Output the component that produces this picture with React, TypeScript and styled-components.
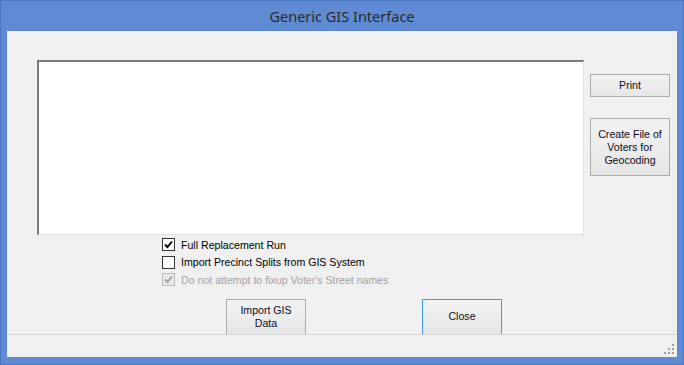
import React from 'react'
import styled, { createGlobalStyle } from 'styled-components'

const GlobalStyle = createGlobalStyle`
  html, body {
    margin: 0;
    padding: 0;
    background: #5f8bd4;
  }
  * {
    box-sizing: border-box;
  }
`

const Window = styled.div`
  width: 684px;
  height: 365px;
  display: flex;
  flex-direction: column;
  background: #5f8bd4;
  border: 1px solid #4a76c2;
  font-family: 'Liberation Sans', Arial, sans-serif;
`

const TitleBar = styled.div`
  height: 30px;
  display: flex;
  align-items: center;
  justify-content: center;
  font-family: 'Noto Sans', 'Open Sans', sans-serif;
  font-size: 14.5px;
  color: #2b2b2b;
`

const Client = styled.div`
  flex: 1;
  margin: 0 6px 7px 6px;
  background: #f0f0f0;
  display: flex;
  flex-direction: column;
  overflow: hidden;
`

const Main = styled.div`
  height: 303px;
  overflow: hidden;
  padding: 29px 0 0 30px;
  display: flex;
  flex-direction: column;
`

const TopRow = styled.div`
  display: flex;
  align-items: flex-start;
`

const ListBox = styled.div`
  width: 547px;
  height: 175px;
  background: #fff;
  border-top: 2px solid #7a7a7a;
  border-left: 2px solid #7a7a7a;
  border-right: 1px solid #e3e3e3;
  border-bottom: 1px solid #e3e3e3;
`

const SideColumn = styled.div`
  display: flex;
  flex-direction: column;
  gap: 21px;
  margin-left: 6px;
  padding-top: 14px;
`

const Button = styled.button<{ $h: number; $focused?: boolean }>`
  width: 80px;
  height: ${p => p.$h}px;
  padding: 0 2px;
  margin: 0;
  font-family: 'Liberation Sans', Arial, sans-serif;
  font-size: 10.6px;
  line-height: 13px;
  color: #0c0c24;
  text-align: center;
  background: linear-gradient(#f2f2f2, #e6e6e6);
  border: 1px solid ${p => (p.$focused ? '#3c9cfc' : '#acacac')};
  border-radius: 0;
  display: flex;
  align-items: center;
  justify-content: center;
`

const Options = styled.div`
  display: flex;
  flex-direction: column;
  margin: 1px 0 0 125px;
`

const OptionRow = styled.label<{ $disabled?: boolean }>`
  height: 17.5px;
  display: flex;
  align-items: center;
  gap: 6px;
  font-size: 10.6px;
  color: ${p => (p.$disabled ? '#a3a3a3' : '#000')};
`

const Box = styled.span<{ $disabled?: boolean }>`
  width: 13px;
  height: 13px;
  display: flex;
  align-items: center;
  justify-content: center;
  background: ${p => (p.$disabled ? '#e8e8e8' : '#fff')};
  border: 1px solid ${p => (p.$disabled ? '#bcbcbc' : '#333')};
`

const ButtonRow = styled.div`
  display: flex;
  gap: 116px;
  margin: 10px 0 0 189px;
`

const StatusBar = styled.div`
  flex: 1;
  border-top: 1px solid #d7d7d7;
  display: flex;
  justify-content: flex-end;
  align-items: flex-end;
  padding: 0 2px 2px 0;
`

const Check: React.FC<{ color: string }> = ({ color }) => (
  <svg width="9" height="9" viewBox="0 0 9 9">
    <path d="M1 4.5 L3.4 7 L8 1.5" fill="none" stroke={color} strokeWidth="1.9" />
  </svg>
)

const Grip = () => (
  <svg width="11" height="11" viewBox="0 0 11 11">
    {[
      [8, 0],
      [4, 4],
      [8, 4],
      [0, 8],
      [4, 8],
      [8, 8],
    ].map(([x, y]) => (
      <rect key={`${x}-${y}`} x={x} y={y} width="2" height="2" fill="#a0a0a0" />
    ))}
  </svg>
)

const Option: React.FC<{ label: string; checked?: boolean; disabled?: boolean }> = ({
  label,
  checked,
  disabled,
}) => (
  <OptionRow $disabled={disabled}>
    <Box $disabled={disabled}>{checked && <Check color={disabled ? '#a3a3a3' : '#000'} />}</Box>
    {label}
  </OptionRow>
)

export default function App() {
  return (
    <>
      <GlobalStyle />
      <Window>
        <TitleBar>Generic GIS Interface</TitleBar>
        <Client>
          <Main>
            <TopRow>
              <ListBox />
              <SideColumn>
                <Button $h={23}>Print</Button>
                <Button $h={58}>
                  Create File of
                  <br />
                  Voters for
                  <br />
                  Geocoding
                </Button>
              </SideColumn>
            </TopRow>
            <Options>
              <Option label="Full Replacement Run" checked />
              <Option label="Import Precinct Splits from GIS System" />
              <Option label="Do not attempt to fixup Voter's Street names" checked disabled />
            </Options>
            <ButtonRow>
              <Button $h={36}>
                Import GIS
                <br />
                Data
              </Button>
              <Button $h={36} $focused>
                Close
              </Button>
            </ButtonRow>
          </Main>
          <StatusBar>
            <Grip />
          </StatusBar>
        </Client>
      </Window>
    </>
  )
}
